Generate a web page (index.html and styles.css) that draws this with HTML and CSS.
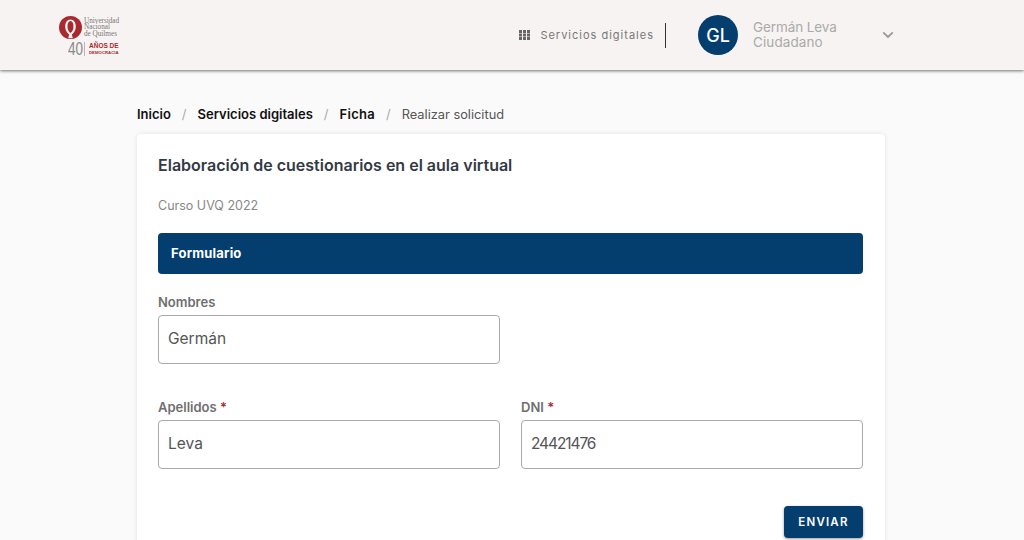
FILE: index.html
```html
<!DOCTYPE html>
<html lang="es">
<head>
<meta charset="utf-8">
<title>Realizar solicitud</title>
<link rel="stylesheet" href="styles.css">
</head>
<body>
<header class="topbar">
  <div class="logo">
    <div class="logo-top">
      <svg class="logo-mark" width="24" height="24" viewBox="0 0 24 24" aria-hidden="true">
        <circle cx="11.500" cy="11.500" r="11.500" fill="#a82a30"/>
        <path d="M11.500 3.500c-3.300 0-5.300 3-5.300 7 0 4 2.300 7 4 7.800l-1 4h4.600l-1-4c1.700-.8 4-3.800 4-7.800 0-4-2-7-5.300-7z" fill="#f6f2f1"/>
        <path d="M11.500 5c-1.900 0-3 2.400-3 5.400 0 3 1.400 5.500 3 6.600 1.600-1.100 3-3.600 3-6.600 0-3-1.100-5.400-3-5.400z" fill="#a82a30"/>
      </svg>
      <div class="logo-name"><span>Universidad</span><span>Nacional</span><span>de Quilmes</span></div>
    </div>
    <div class="logo-bottom">
      <span class="logo-forty">40</span>
      <span class="logo-bar"></span>
      <div class="logo-years"><span class="logo-anos">AÑOS DE</span><span class="logo-demo">DEMOCRACIA</span></div>
    </div>
  </div>
  <nav class="topnav">
    <svg class="grid-icon" width="11" height="10" viewBox="0 0 11 10" aria-hidden="true">
      <path d="M0 0h3v3H0zM4 0h3v3H4zM8 0h3v3H8zM0 3.500h3v3H0zM4 3.500h3v3H4zM8 3.500h3v3H8zM0 7h3v3H0zM4 7h3v3H4zM8 7h3v3H8z" fill="#666"/>
    </svg>
    <span class="topnav-label">Servicios digitales</span>
    <span class="topnav-sep"></span>
  </nav>
  <div class="user">
    <div class="avatar">GL</div>
    <div class="user-info"><span class="user-name">Germán Leva</span><span>Ciudadano</span></div>
    <svg class="chevron" width="12" height="8" viewBox="0 0 12 8" aria-hidden="true"><path d="M1.200 1.400 6 6l4.800-4.600" fill="none" stroke="#999" stroke-width="1.800"/></svg>
  </div>
</header>
<main class="page">
  <ol class="crumbs">
    <li class="crumb-link">Inicio</li>
    <li class="crumb-sep">/</li>
    <li class="crumb-link">Servicios digitales</li>
    <li class="crumb-sep">/</li>
    <li class="crumb-link">Ficha</li>
    <li class="crumb-sep">/</li>
    <li class="crumb-current">Realizar solicitud</li>
  </ol>
  <section class="card">
    <h1 class="card-title">Elaboración de cuestionarios en el aula virtual</h1>
    <p class="card-sub">Curso UVQ 2022</p>
    <div class="band">Formulario</div>
    <form class="form">
      <div class="field">
        <label class="label">Nombres</label>
        <div class="input">Germán</div>
      </div>
      <div class="field"></div>
      <div class="field">
        <label class="label">Apellidos <span class="req">*</span></label>
        <div class="input">Leva</div>
      </div>
      <div class="field">
        <label class="label">DNI <span class="req">*</span></label>
        <div class="input input-num">24421476</div>
      </div>
    </form>
    <div class="actions"><button class="send" type="button">ENVIAR</button></div>
  </section>
</main>
</body>
</html>
```
FILE: styles.css
```css
* { box-sizing: border-box; }
html, body { margin: 0; height: 540px; overflow: hidden; }
body { background: #fafafa; font-family: Inter, "Noto Sans", sans-serif; color: #555; }

.topbar {
  height: 70px;
  background: #f7f3f2;
  box-shadow: 0 1px 3px rgba(0,0,0,.55);
  display: flex;
  align-items: center;
  padding: 0 130px 0 59px;
}
.logo { width: 62px; display: flex; flex-direction: column; gap: 2px; margin-top: 2px; }
.logo-top { display: flex; align-items: center; gap: 1px; }
.logo-mark { flex: none; }
.logo-name { display: flex; flex-direction: column; font-family: "Liberation Serif", serif; font-size: 7.200px; line-height: 6.500px; color: #777; white-space: nowrap; }
.logo-bottom { display: flex; align-items: center; padding-left: 9px; }
.logo-forty { width: 15px; font-family: "Liberation Sans", sans-serif; font-size: 18px; line-height: 15px; color: #888; transform: scaleX(.75); transform-origin: left center; }
.logo-bar { width: 1px; height: 14px; background: #c9aeae; margin: 0 4px 0 1px; }
.logo-years { display: flex; flex-direction: column; color: #a82a30; font-family: "Liberation Sans", sans-serif; font-weight: 700; white-space: nowrap; }
.logo-anos { font-size: 6.500px; line-height: 8px; }
.logo-demo { font-size: 4.300px; line-height: 6px; }

.topnav { margin-left: auto; display: flex; align-items: center; }
.grid-icon { margin-right: 10px; }
.topnav-label { font-size: 11px; letter-spacing: 1px; color: #777; white-space: nowrap; }
.topnav-sep { width: 1px; height: 25px; background: #333; margin-left: 11px; }

.user { display: flex; align-items: center; margin-left: 32px; }
.avatar {
  width: 40px; height: 40px; border-radius: 50%;
  background: #033e6f; color: #fff;
  display: flex; align-items: center; justify-content: center;
  font-size: 18px; font-weight: 500;
}
.user-info { display: flex; flex-direction: column; width: 129px; margin-left: 15px; font-size: 13.500px; letter-spacing: .1px; line-height: 15px; color: #aaa; }
.user-name { letter-spacing: -.1px; }
.chevron { flex: none; }

.page { width: 748px; margin-left: 137px; }
.crumbs { list-style: none; margin: 0; padding: 24px 0 0; height: 64px; display: flex; align-items: center; gap: 11px; font-size: 13px; white-space: nowrap; }
.crumb-link { font-weight: 600; color: #111; }
.crumb-link:nth-child(5) { letter-spacing: .3px; }
.crumb-sep { color: #aaa; }
.crumb-current { color: #555; font-size: 12.800px; }

.card { background: #fff; border-radius: 4px; box-shadow: 0 0 4px rgba(0,0,0,.1); padding: 20px 22px 0 21px; height: 420px; }
.card-title { margin: 0; font-size: 16px; line-height: 22px; font-weight: 600; color: #333a45; }
.card-sub { margin: 21px 0 0; font-size: 12.500px; line-height: 18px; color: #888; }
.band { margin-top: 18px; height: 41px; border-radius: 4px; background: #033e6f; color: #fff; font-size: 13px; letter-spacing: .2px; font-weight: 700; display: flex; align-items: center; padding: 0 0 2px 13px; }

.form { display: grid; grid-template-columns: 342px 342px; column-gap: 21px; row-gap: 35px; margin-top: 20px; }
.field { min-height: 70px; display: flex; flex-direction: column; }
.label { font-size: 13px; line-height: 16px; font-weight: 600; color: #6f6f6f; margin-bottom: 5px; }
.req { color: #a82a30; }
.input { height: 49px; border: 1px solid #aaa; border-radius: 4px; background: #fff; padding: 0 9px 2px; display: flex; align-items: center; font-size: 15.500px; color: #555; }
.input-num { letter-spacing: -1.100px; }

.actions { display: flex; justify-content: flex-end; margin-top: 37px; }
.send { width: 79px; height: 32px; border: 0; border-radius: 4px; background: #033e6f; color: #fff; font-family: inherit; font-size: 11.500px; font-weight: 600; letter-spacing: 1.200px; box-shadow: 0 1px 3px rgba(0,0,0,.4); padding: 0; }
```
